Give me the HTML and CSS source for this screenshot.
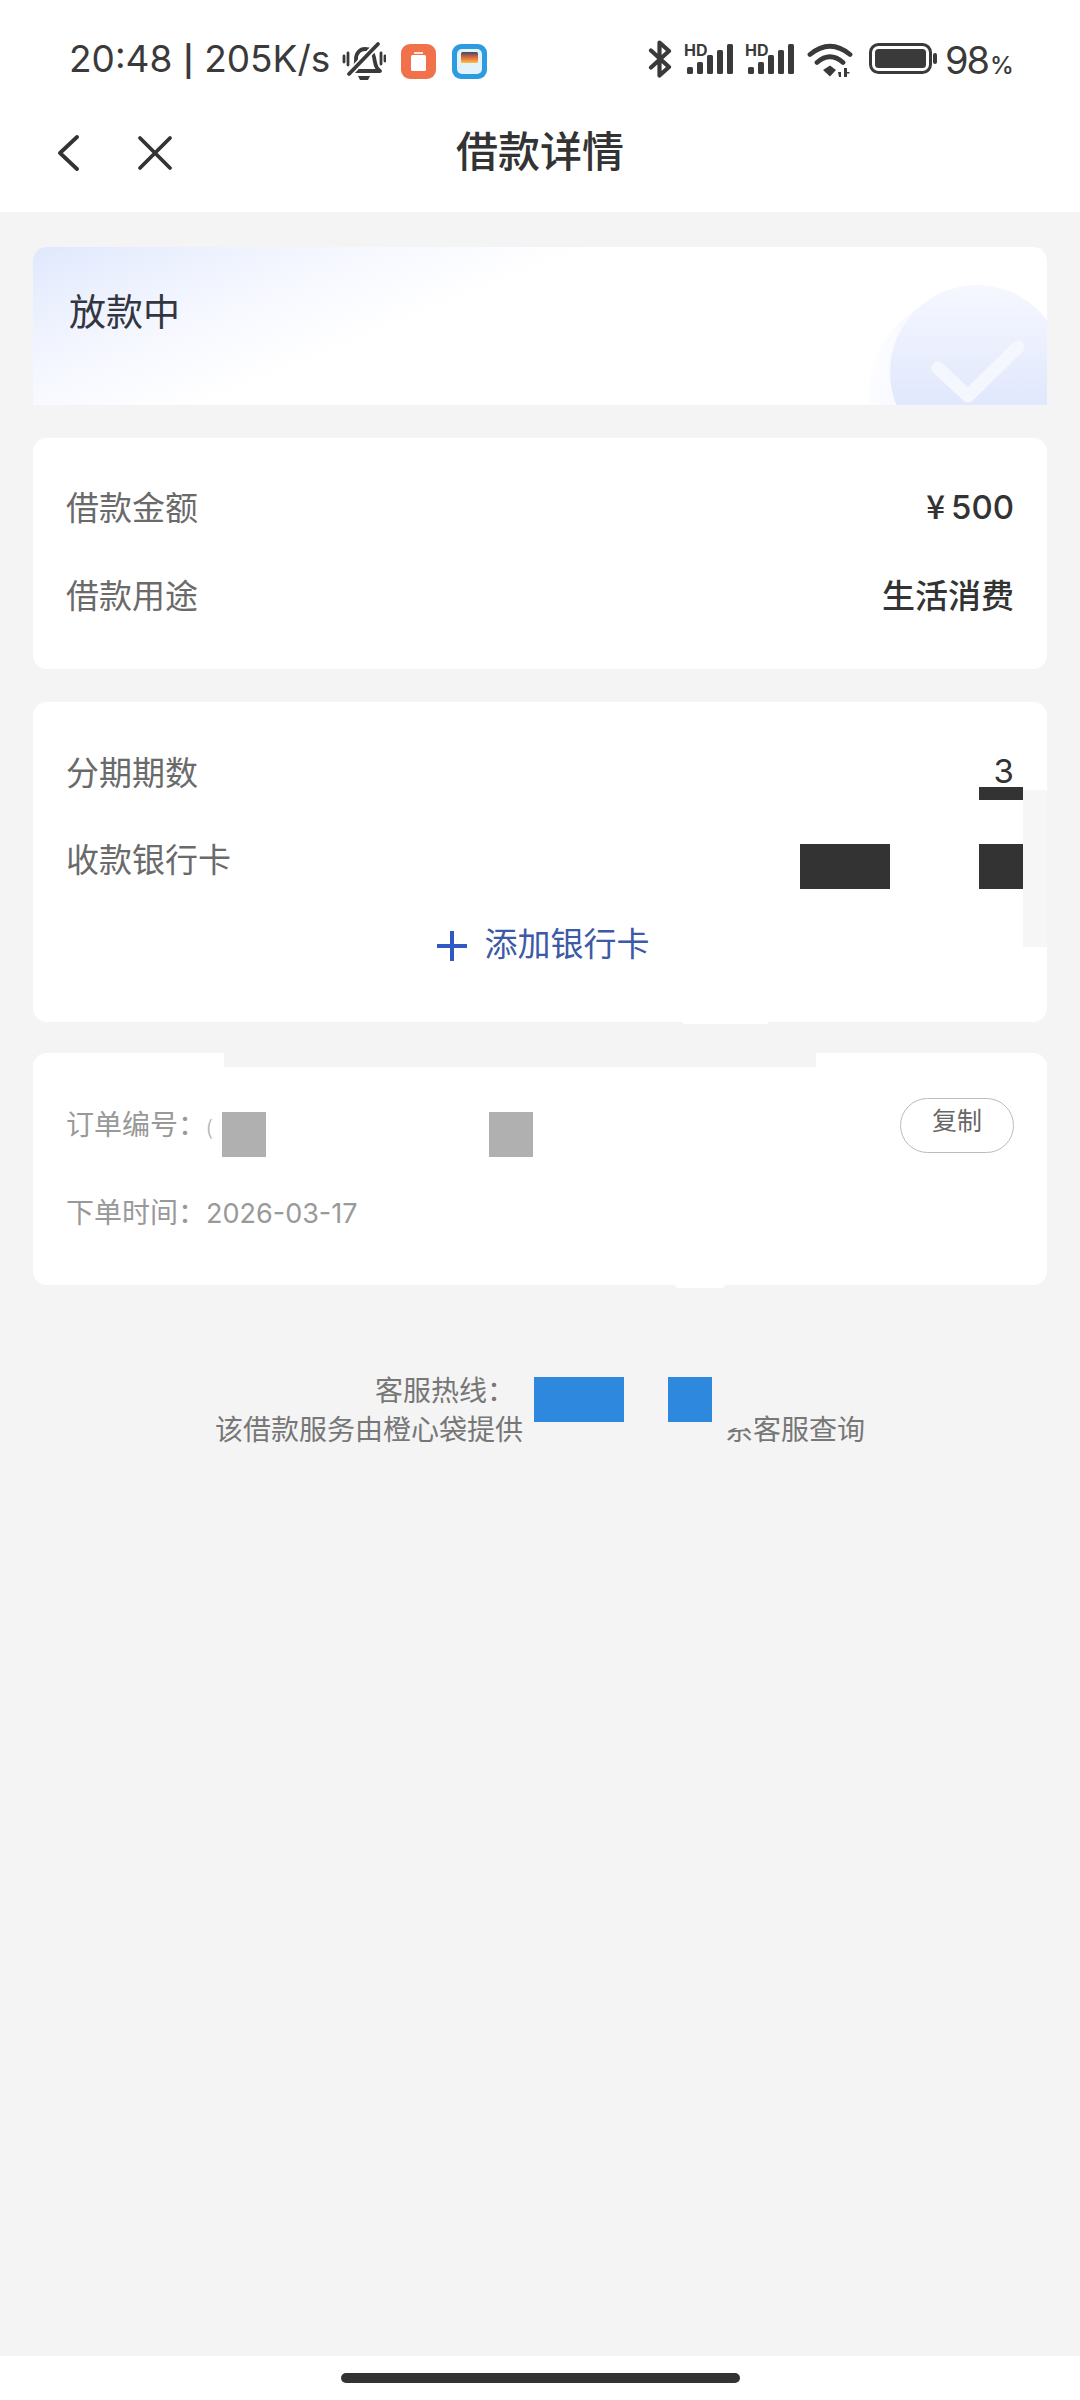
FILE: index.html
```html
<!DOCTYPE html>
<html lang="zh-CN">
<head>
<meta charset="utf-8">
<title>借款详情</title>
<link rel="stylesheet" href="styles.css">
</head>
<body>
<div class="page">
  <header class="top">
    <div class="status">
      <div class="status-left">
        <span class="clock">20:48 <span class="sep">|</span> 205K/s</span>
        <svg class="ic-bell" viewBox="0 0 44 40" width="44" height="40"><path d="M12 27c2-2 2-5 2-9 0-6 4-10 9-10s8 3 9 8c1 5 1 8 3 11l3 3H9z" fill="none" stroke="#3a3a3a" stroke-width="3.800" stroke-linejoin="round"/><path d="M7 33 36 3" stroke="#fff" stroke-width="7"/><path d="M7 33 36 3" stroke="#3a3a3a" stroke-width="3.800" stroke-linecap="round"/><path d="M16 35h12l-2 4h-8z" fill="#3a3a3a"/><path d="M2 15v6M6 12v12M39 12v11M43 15v5" stroke="#3a3a3a" stroke-width="2.800" stroke-linecap="round"/></svg>
        <svg class="ic-app" viewBox="0 0 35 35" width="35" height="35"><rect width="35" height="35" rx="9" fill="#f0714a"/><rect x="10" y="11" width="15" height="16" rx="1.500" fill="#fff"/><rect x="13" y="8" width="9" height="2" fill="#fde3da"/></svg>
        <svg class="ic-app" viewBox="0 0 35 35" width="35" height="35"><defs><linearGradient id="wal" x1="0" y1="0" x2="0" y2="1"><stop offset="0" stop-color="#3a4a6a"/><stop offset=".5" stop-color="#e26a3a"/><stop offset="1" stop-color="#f6c04a"/></linearGradient></defs><rect width="35" height="35" rx="9" fill="#2c9be0"/><rect x="5" y="5" width="25" height="25" rx="5" fill="#e3f3fb"/><rect x="9" y="8" width="17" height="11" rx="1.500" fill="url(#wal)"/></svg>
      </div>
      <div class="status-right">
        <svg class="ic-bt" viewBox="0 0 24 38" width="24" height="38"><path d="M3 10.500 21 27 11.500 35.500V2.500L21 11 3 27.500" fill="none" stroke="#3a3a3a" stroke-width="4.200" stroke-linecap="round" stroke-linejoin="round"/></svg>
        <div class="sig"><span class="hd">HD</span><svg viewBox="0 0 52 30" width="52" height="30"><rect x="4" y="23" width="6" height="7" rx="1.500" fill="#3a3a3a"/><rect x="14" y="18" width="6" height="12" rx="1.500" fill="#3a3a3a"/><rect x="24" y="11" width="6" height="19" rx="1.500" fill="#3a3a3a"/><rect x="34" y="6" width="6" height="24" rx="1.500" fill="#3a3a3a"/><rect x="44" y="0" width="6" height="30" rx="1.500" fill="#3a3a3a"/></svg></div>
        <div class="sig last"><span class="hd">HD</span><svg viewBox="0 0 52 30" width="52" height="30"><rect x="4" y="23" width="6" height="7" rx="1.500" fill="#3a3a3a"/><rect x="14" y="18" width="6" height="12" rx="1.500" fill="#3a3a3a"/><rect x="24" y="11" width="6" height="19" rx="1.500" fill="#3a3a3a"/><rect x="34" y="6" width="6" height="24" rx="1.500" fill="#3a3a3a"/><rect x="44" y="0" width="6" height="30" rx="1.500" fill="#3a3a3a"/></svg></div>
        <svg class="ic-wifi" viewBox="0 0 46 34" width="46" height="34"><path d="M3 11.500Q23-5 43 11.500M10 19.500Q23 8 36 19.500" fill="none" stroke="#3a3a3a" stroke-width="4.800" stroke-linecap="round"/><path d="M16 27l7-4.500 6 4.500-6 6.500z" fill="#3a3a3a"/><path d="M31 29h3v5h-2zM37 25h3v4h2.500v1.500H40V34h-3z" fill="#3a3a3a"/></svg>
        <svg class="ic-batt" viewBox="0 0 68 31" width="68" height="31"><rect x="1.500" y="1.500" width="60" height="28" rx="8" fill="none" stroke="#3a3a3a" stroke-width="3"/><rect x="6" y="6" width="51" height="19" rx="3.500" fill="#3a3a3a"/><rect x="64" y="10" width="4" height="11" rx="2" fill="#3a3a3a"/></svg>
        <span class="pct">98<small>%</small></span>
      </div>
    </div>
    <nav class="nav">
      <div class="nav-btns">
        <svg viewBox="0 0 22 36" width="22" height="36"><path d="M20 2 3 18l17 16" fill="none" stroke="#333" stroke-width="3.800" stroke-linecap="round" stroke-linejoin="round"/></svg>
        <svg viewBox="0 0 36 36" width="36" height="36"><path d="M3 3 33 33M33 3 3 33" fill="none" stroke="#333" stroke-width="3.800" stroke-linecap="round"/></svg>
      </div>
      <h1 class="title">借款详情</h1>
    </nav>
  </header>

  <main class="main">
    <section class="card state">
      <span class="state-text">放款中</span>
      <div class="halo"></div>
      <div class="disc"></div>
      <svg class="tick" viewBox="0 0 105 70" width="105" height="70"><path d="M13 33 43 61 93 12" fill="none" stroke="#f5f7ff" stroke-width="13" stroke-linecap="round" stroke-linejoin="round"/></svg>
    </section>

    <section class="card info">
      <div class="row"><span class="label">借款金额</span><span class="value amount">¥<span class="num">500</span></span></div>
      <div class="row"><span class="label">借款用途</span><span class="value">生活消费</span></div>
    </section>

    <section class="card bank">
      <div class="row"><span class="label">分期期数</span><span class="value num plain">3</span></div>
      <div class="row card-row">
        <span class="label">收款银行卡</span>
        <div class="masks"><i class="mask dark wide"></i><i class="mask dark"></i></div>
      </div>
      <div class="add"><span class="plus"></span><span>添加银行卡</span></div>
      <i class="mask dark stub"></i>
      <i class="fade"></i>
      <i class="nick"></i>
    </section>

    <section class="card order">
      <i class="notch"></i>
      <div class="order-row">
        <span class="order-text">订单编号：<span class="stray">(</span></span>
        <div class="masks grey"><i class="mask gray"></i><i class="mask gray"></i></div>
        <span class="copy">复制</span>
      </div>
      <div class="order-row second"><span class="order-text">下单时间：<span class="date">2026-03-17</span></span></div>
      <i class="nick low"></i>
    </section>

    <footer class="foot">
      <div class="hot"><span>客服热线：</span><div class="masks blue"><i class="mask azure wide"></i><i class="mask azure"></i></div></div>
      <div class="note"><span>该借款服务由橙心袋提供</span><span class="gap"></span><span class="cut">系</span><span>客服查询</span></div>
    </footer>
  </main>

  <div class="home"><span class="pill"></span></div>
</div>
</body>
</html>
```
FILE: styles.css
```css
* { box-sizing: border-box; }
html, body { margin: 0; padding: 0; }
body {
  width: 1080px;
  height: 2400px;
  overflow: hidden;
  background: #f4f4f4;
  color: #333;
  font-family: "Noto Sans CJK SC", "Inter", sans-serif;
}
i { display: block; }
.page { display: flex; flex-direction: column; height: 2400px; }

.top { background: #fff; height: 212px; flex: none; }
.status { height: 118px; padding: 41px 69px 0; display: flex; justify-content: space-between; align-items: flex-start; color: #3a3a3a; }
.status-left { display: flex; align-items: center; height: 40px; }
.clock { font-family: "Inter", sans-serif; font-size: 37px; line-height: 38px; width: 273px; white-space: nowrap; margin-top: -2px; }
.sep { font-size: 30px; font-weight: 600; display: inline-block; width: 11px; text-align: center; }
.ic-bell { margin-right: 15px; }
.ic-app { margin-right: 16px; }
.status-right { display: flex; align-items: flex-start; height: 40px; }
.ic-bt { margin: -1px 11px 0 0; }
.sig { position: relative; width: 52px; height: 30px; margin: 3px 9px 0 0; }
.sig.last { margin-right: 11px; }
.sig svg { display: block; }
.hd { position: absolute; left: 1px; top: 0; font-family: "Inter", sans-serif; font-weight: 700; font-size: 16px; line-height: 12px; }
.ic-wifi { margin: 2px 16px 0 0; }
.ic-batt { margin: 2px 8px 0 0; }
.pct { font-family: "Inter", sans-serif; font-size: 38px; line-height: 40px; letter-spacing: -2px; width: 66px; margin-top: -1px; white-space: nowrap; }
.pct small { font-size: 24px; font-weight: 500; letter-spacing: 0; margin-left: 2px; }

.nav { position: relative; height: 94px; padding: 17px 57px 0; display: flex; align-items: flex-start; }
.nav-btns { display: flex; gap: 58px; align-items: center; height: 36px; }
.title { position: absolute; left: 0; right: 0; top: 6px; margin: 0; text-align: center; font-size: 42px; line-height: 50px; font-weight: 500; color: #333; }

.main { flex: 1; padding: 35px 33px 0; display: flex; flex-direction: column; }
.card { position: relative; background: #fff; border-radius: 14px; width: 1014px; }

.state { height: 158px; padding: 38px 36px 0; overflow: hidden; border-radius: 14px 14px 0 0; background: linear-gradient(158deg, #dfe8fd 0, #ebf0fe 11%, #f6f8ff 24%, #fff 40%); }
.state-text { display: block; font-size: 37px; line-height: 50px; color: #33363f; }
.halo { position: absolute; right: -21px; top: 48px; width: 200px; height: 200px; border-radius: 50%; background: linear-gradient(100deg, #fff 0, #f5f7ff 30%); }
.disc { position: absolute; right: -17px; top: 38px; width: 174px; height: 174px; border-radius: 50%; background: linear-gradient(180deg, #f6f8ff 0, #dfe6fc 75%); }
.tick { position: absolute; right: 17px; top: 88px; }

.info { height: 231px; margin-top: 33px; padding: 46px 33px 0; }
.row { display: flex; justify-content: space-between; align-items: center; height: 44px; }
.row + .row { margin-top: 44px; }
.label { font-size: 33px; line-height: 44px; color: #6a6a6a; }
.value { font-size: 33px; line-height: 44px; font-weight: 500; color: #333; }
.num { font-family: "Inter", sans-serif; font-weight: 500; font-size: 33px; }
.amount .num { margin-left: 6px; }
.plain { font-weight: 400; }

.bank { height: 320px; margin-top: 33px; padding: 47px 33px 0; }
.bank .row + .row { margin-top: 43px; }
.card-row { align-items: flex-start; }
.masks { display: flex; }
.mask { height: 45px; width: 44px; }
.mask.wide { width: 90px; }
.dark { background: #333; }
.card-row .masks { gap: 89px; margin-right: -9px; margin-top: 8px; }
.stub { position: absolute; right: 24px; top: 85px; height: 13px; }
.fade { position: absolute; right: 0; top: 88px; width: 24px; height: 157px; background: #f6f6f6; }
.nick { position: absolute; left: 650px; bottom: -2px; width: 85px; height: 2px; background: #fff; }
.nick.low { left: 642px; width: 50px; height: 3px; bottom: -3px; border-radius: 0 0 20px 20px; }
.add { display: flex; align-items: center; justify-content: center; margin-top: 40px; padding-left: 6px; color: #3c5aa6; font-size: 33px; line-height: 44px; }
.plus { position: relative; width: 30px; height: 30px; margin: 8px 18px 0 0; flex: none; }
.plus::before, .plus::after { content: ""; position: absolute; background: #3159c4; }
.plus::before { left: 0; right: 0; top: 13px; height: 4px; }
.plus::after { top: 0; bottom: 0; left: 13px; width: 4px; }

.order { height: 232px; margin-top: 31px; padding: 45px 33px 0; }
.notch { position: absolute; left: 191px; top: 0; width: 592px; height: 14px; background: #f4f4f4; }
.order-row { display: flex; align-items: flex-start; height: 50px; }
.order-row.second { margin-top: 38px; }
.order-text { font-size: 28px; line-height: 50px; color: #999; white-space: nowrap; width: 156px; }
.second .order-text { width: auto; }
.date { font-family: "Inter", sans-serif; font-size: 27px; }
.stray { color: #b5b5b5; font-size: 20px; }
.grey { gap: 223px; margin-top: 14px; }
.gray { background: #b0b0b0; }
.copy { margin-left: auto; width: 114px; height: 55px; border: 1px solid #bbb; border-radius: 28px; font-size: 25px; line-height: 40px; text-align: center; color: #666; }

.foot { margin-top: 89px; display: flex; flex-direction: column; align-items: center; color: #777; font-size: 28px; }
.hot { display: flex; height: 35px; line-height: 30px; width: 650px; padding-left: 160px; }
.hot span { width: 159px; white-space: nowrap; }
.blue { gap: 44px; margin-top: 3px; }
.azure { background: #2d88de; }
.note { display: flex; width: 650px; line-height: 38px; height: 38px; white-space: nowrap; }
.gap { width: 204px; }
.cut { position: relative; width: 28px; }
.cut::after { content: ""; position: absolute; left: -2px; right: -2px; top: 0; height: 19px; background: #f4f4f4; }

.home { flex: none; height: 44px; background: #fff; display: flex; justify-content: center; padding-top: 17px; }
.pill { width: 399px; height: 10px; border-radius: 5px; background: #333; }
```
